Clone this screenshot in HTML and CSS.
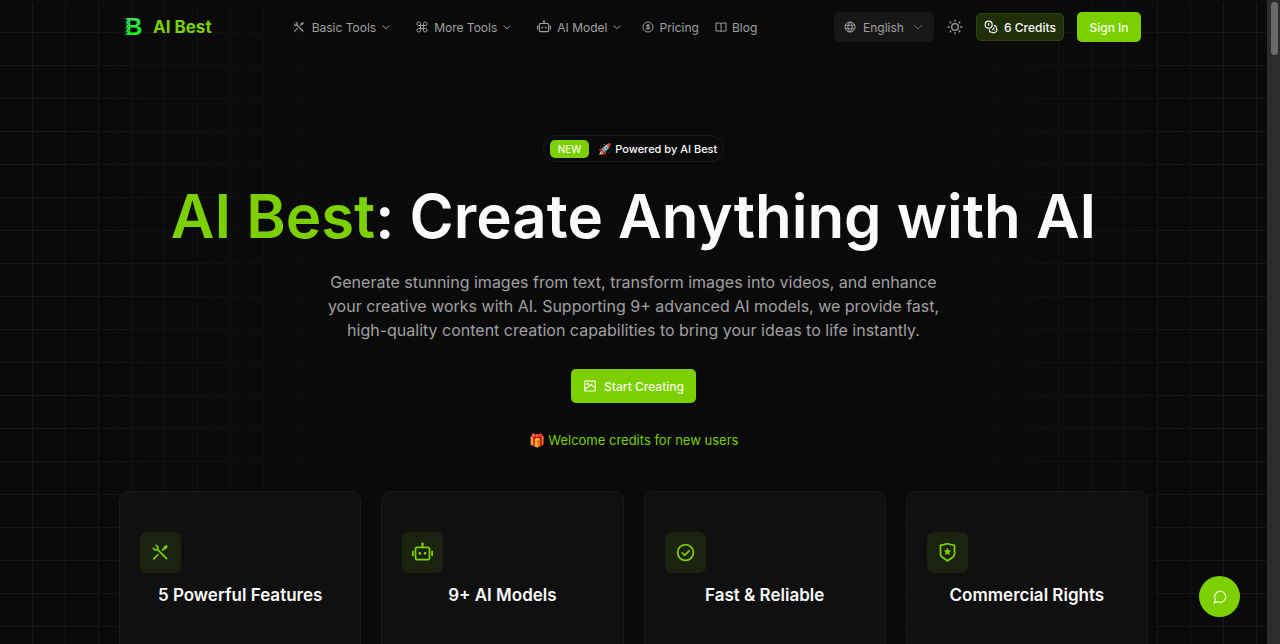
FILE: index.html
```html
<!DOCTYPE html>
<html lang="en">
<head>
    <meta charset="UTF-8">
    <meta name="viewport" content="width=device-width, initial-scale=1.0">
    <title>AI Best</title>
    <link rel="stylesheet" href="styles.css">
</head>
<body>

    <!-- shared icons -->
    <svg class="sprite" aria-hidden="true">
        <symbol id="tools" viewBox="0 0 24 24">
            <path fill="currentColor" d="M5.33 3.27C6.56 2.83 7.99 3.11 8.98 4.09C10.1 5.22 10.3 6.91 9.58 8.23L20.29 18.94L18.88 20.36L8.17 9.65C6.84 10.37 5.15 10.17 4.03 9.04C3.04 8.06 2.77 6.63 3.21 5.39L5.44 7.63C6.03 8.22 6.98 8.22 7.57 7.63C8.15 7.04 8.15 6.09 7.57 5.51ZM15.7 5.16L18.88 3.39L20.29 4.8L18.53 7.98L16.76 8.34L14.64 10.46L13.22 9.04L15.34 6.92ZM8.98 13.29L10.39 14.7L5.09 20C4.7 20.39 4.07 20.39 3.68 20C3.31 19.64 3.29 19.07 3.6 18.68Z"/>
        </symbol>
        <symbol id="robot" viewBox="0 0 24 24">
            <g fill="none" stroke="currentColor" stroke-width="2">
                <rect x="4" y="6" width="16" height="14" rx="2"/>
                <path d="M12 6V2M1 10v6M23 10v6"/>
            </g>
            <g fill="currentColor">
                <circle cx="12" cy="2" r="1.5"/>
                <circle cx="9" cy="13" r="1.5"/>
                <circle cx="15" cy="13" r="1.5"/>
            </g>
        </symbol>
        <symbol id="chevron" viewBox="0 0 24 24">
            <path class="line thick" d="m2 8 10 9 10-9"/>
        </symbol>
    </svg>

    <header class="header">
        <a class="brand" href="#">
            <svg class="brand-logo" viewBox="0 0 20 20" aria-hidden="true">
                <defs>
                    <linearGradient id="logo-fill" x1="0" y1="0" x2="0" y2="1">
                        <stop offset="0" stop-color="#4ade70"/>
                        <stop offset="1" stop-color="#00f50c"/>
                    </linearGradient>
                </defs>
                <text class="logo-letter" x="2" y="18" fill="url(#logo-fill)">B</text>
                <path fill="#14702a" d="M4 3h1v1H4zM5 5h1v1H5zM4 7h1v1H4zM5 9h1v1H5zM4 11h1v1H4zM5 13h1v1H5zM4 15h1v1H4z"/>
                <path fill="#1d7434" d="M1 1h3v1H1zM3 3h1v1H3zM2 5h2v1H2zM3 8h1v1H3zM2 10h2v1H2zM3 12h1v1H3zM2 14h2v1H2zM3 16h1v1H3zM1 17h3v1H1z"/>
            </svg>
            <span>AI Best</span>
        </a>

        <nav class="nav">
            <button class="nav-item" type="button">
                <svg class="icon-14"><use href="#tools"/></svg>
                Basic Tools
                <svg class="caret"><use href="#chevron"/></svg>
            </button>
            <button class="nav-item" type="button">
                <svg class="icon-12" viewBox="0 0 24 24"><path class="line" d="M9 9h6v6H9zM9 9H5.500A3.500 3.500 0 1 1 9 5.500zM15 9V5.500a3.500 3.500 0 1 1 3.500 3.500zM15 15h3.500a3.500 3.500 0 1 1-3.500 3.500zM9 15v3.500a3.500 3.500 0 1 1-3.500-3.500z"/></svg>
                More Tools
                <svg class="caret"><use href="#chevron"/></svg>
            </button>
            <button class="nav-item" type="button">
                <svg class="icon-14"><use href="#robot"/></svg>
                AI Model
                <svg class="caret"><use href="#chevron"/></svg>
            </button>
            <a class="nav-item nav-link" href="#">
                <svg class="icon-12" viewBox="0 0 24 24"><circle class="line" cx="12" cy="12" r="10"/><path class="line" d="M16 8.500h-5.500a1.750 1.750 0 0 0 0 3.500h3a1.750 1.750 0 0 1 0 3.500H8M12 6v12"/></svg>
                Pricing
            </a>
            <a class="nav-item nav-link" href="#">
                <svg class="icon-12" viewBox="0 0 24 24"><path class="line" d="M12 5.500C11 4.500 10 4 8.500 4H2v16h7c1.500 0 2.500.5 3 1.500.5-1 1.500-1.500 3-1.500h7V4h-6.500C14 4 13 4.500 12 5.500zM12 5v17"/></svg>
                Blog
            </a>
        </nav>

        <div class="actions">
            <button class="language" type="button">
                <svg class="icon-12" viewBox="0 0 24 24"><path class="line" d="M12 2a10 10 0 1 0 0 20 10 10 0 0 0 0-20zM12 2c-5.500 5-5.500 15 0 20M12 2c5.500 5 5.500 15 0 20M3 8.500h18M3 15.500h18"/></svg>
                <span>English</span>
                <svg class="icon-12 dim" viewBox="0 0 24 24"><path class="line" d="m4 8 8 8 8-8"/></svg>
            </button>
            <button class="theme" type="button" aria-label="Toggle theme">
                <svg class="icon-16" viewBox="0 0 24 24"><circle class="line" cx="12" cy="12" r="5"/><path class="line" d="M12 1v3M12 20v3M1 12h3M20 12h3M4.200 4.200l2.100 2.100M17.700 17.700l2.100 2.100M19.800 4.200l-2.100 2.100M6.300 17.700l-2.100 2.100"/></svg>
            </button>
            <a class="credits" href="#">
                <svg class="icon-14" viewBox="0 0 24 24"><path class="line" d="M8 2a6 6 0 1 0 0 12A6 6 0 0 0 8 2zM7 6h1v4M12.500 20.500a5.500 5.500 0 1 0 8-8M9 16c0 3 1 4.500 3 5.500M17 9c2 .5 3.500 1.500 4.500 3.500M14 17l4-4M17 18l1-1"/></svg>
                6 Credits
            </a>
            <button class="btn sign-in" type="button">Sign In</button>
        </div>
    </header>

    <main>
        <section class="hero">
            <a class="announce" href="#">
                <span class="tag">NEW</span>
                <span>🚀 Powered by AI Best</span>
            </a>
            <h1><span class="highlight">AI Best</span>: Create Anything with AI</h1>
            <p class="intro">
                Generate stunning images from text, transform images into videos, and enhance<br>
                your creative works with AI. Supporting 9+ advanced AI models, we provide fast,<br>
                high-quality content creation capabilities to bring your ideas to life instantly.
            </p>
            <a class="btn start" href="#">
                <svg class="icon-14" viewBox="0 0 24 24"><path class="line" d="M3 3.500h18v17H3zM3 18l11-9 7 7"/><circle cx="8" cy="8.500" r="2" fill="currentColor"/></svg>
                Start Creating
            </a>
            <p class="welcome">🎁 Welcome credits for new users</p>
        </section>

        <section class="features">
            <article class="card">
                <div class="card-icon"><svg class="icon-21"><use href="#tools"/></svg></div>
                <h2>5 Powerful Features</h2>
            </article>
            <article class="card">
                <div class="card-icon"><svg class="icon-21"><use href="#robot"/></svg></div>
                <h2>9+ AI Models</h2>
            </article>
            <article class="card">
                <div class="card-icon">
                    <svg class="icon-21" viewBox="0 0 24 24"><circle class="line" cx="12" cy="12" r="9"/><path class="line" d="m7.700 12 3.300 3.300 5.700-5.700"/></svg>
                </div>
                <h2>Fast &amp; Reliable</h2>
            </article>
            <article class="card">
                <div class="card-icon">
                    <svg class="icon-21" viewBox="0 0 24 24"><path class="line" d="m12 2 8 2v9.800c0 1.300-.7 2.600-1.800 3.300L12 21.500l-6.200-4.400A4 4 0 0 1 4 13.800V4z"/><path fill="currentColor" d="m12 6.500 1.300 2.800 3.100.4-2.300 2.100.6 3.200-2.700-1.500L9.300 15l.6-3.200-2.300-2.100 3.100-.4z"/></svg>
                </div>
                <h2>Commercial Rights</h2>
            </article>
        </section>
    </main>

    <button class="chat" type="button" aria-label="Open chat">
        <svg class="icon-14" viewBox="0 0 24 24"><path class="line" d="M7.900 20A9.500 9.500 0 1 0 4 16.100L2 22z"/></svg>
    </button>

    <div class="scrollbar" aria-hidden="true"><div class="thumb"></div></div>

</body>
</html>
```
FILE: styles.css
```css
* {
    margin: 0;
    padding: 0;
    box-sizing: border-box;
}

html {
    background-color: #0a0a0a;
}

body {
    display: flex;
    flex-direction: column;
    min-height: 100vh;
    padding-right: 13px;
    position: relative;
    color: #fafafa;
    font-family: Inter, "Noto Sans", sans-serif;
    font-size: 12px;
}

/* faint grid, fading out towards the middle */
body::before,
body::after {
    content: "";
    position: absolute;
    top: 3px;
    bottom: 0;
    z-index: -1;
    width: 40%;
    background-image:
        linear-gradient(#181818 1px, transparent 1px),
        linear-gradient(90deg, #181818 1px, transparent 1px);
    background-size: 33px 33px;
}

body::before {
    left: 0;
    background-position: 32px 29px;
    -webkit-mask-image: linear-gradient(90deg, #000 10%, transparent 75%);
    mask-image: linear-gradient(90deg, #000 10%, transparent 75%);
}

body::after {
    right: 13px;
    background-position: right 11px top 29px;
    -webkit-mask-image: linear-gradient(270deg, #000 10%, transparent 75%);
    mask-image: linear-gradient(270deg, #000 10%, transparent 75%);
}

a {
    color: inherit;
    text-decoration: none;
}

button {
    border: none;
    background: none;
    color: inherit;
    font: inherit;
    cursor: pointer;
}

svg {
    flex: none;
}

.sprite {
    display: none;
}

.line {
    fill: none;
    stroke: currentColor;
    stroke-width: 2;
}

.thick {
    stroke-width: 3;
}

.icon-12 {
    width: 12px;
    height: 12px;
}

.icon-14 {
    width: 14px;
    height: 14px;
}

.icon-16 {
    width: 16px;
    height: 16px;
}

.icon-21 {
    width: 21px;
    height: 21px;
}

.dim {
    opacity: 0.6;
}

.header,
.features {
    width: 100%;
    max-width: 1029px;
    margin: 0 auto;
}

/* header */
.header {
    display: flex;
    align-items: center;
    height: 54px;
    padding: 0 7px 0 4px;
}

.brand {
    display: flex;
    align-items: center;
    gap: 10px;
    color: #7ccf00;
    font-size: 17px;
    font-weight: 700;
}

.brand-logo {
    width: 20px;
    height: 20px;
    overflow: visible;
}

.logo-letter {
    font-family: "Liberation Sans", sans-serif;
    font-size: 24px;
    font-weight: 700;
}

.nav {
    display: flex;
    margin-left: 67px;
    color: #a1a1a1;
}

.nav-item {
    display: flex;
    align-items: center;
    gap: 6px;
    padding: 0 13px;
    white-space: nowrap;
}

.nav-link {
    gap: 5px;
    padding: 0 8px;
}

.caret {
    width: 8px;
    height: 8px;
}

.actions {
    display: flex;
    align-items: center;
    gap: 13px;
    margin-left: auto;
}

.language {
    display: flex;
    align-items: center;
    gap: 7px;
    width: 100px;
    height: 30px;
    padding: 0 10px;
    border-radius: 5px;
    background-color: #171717;
    color: #a1a1a1;
}

.language span {
    flex: 1;
    text-align: left;
}

.theme {
    display: flex;
    color: #a1a1a1;
}

.credits {
    display: flex;
    align-items: center;
    justify-content: center;
    gap: 6px;
    width: 88px;
    height: 28px;
    border: 1px solid #2e4310;
    border-radius: 5px;
    background-color: #212e0a;
    font-weight: 500;
}

.btn {
    display: flex;
    align-items: center;
    justify-content: center;
    border-radius: 5px;
    background-color: #7ccf00;
    color: #f7fee7;
    font-weight: 500;
}

.sign-in {
    width: 64px;
    height: 30px;
}

main {
    display: flex;
    flex: 1;
    flex-direction: column;
}

/* hero */
.hero {
    display: flex;
    flex-direction: column;
    align-items: center;
    padding: 81px 20px 41px;
    text-align: center;
}

.announce {
    display: flex;
    align-items: center;
    gap: 9px;
    height: 27px;
    padding: 0 6px;
    border: 1px solid #1c1c1c;
    border-radius: 14px;
    font-size: 11px;
    font-weight: 500;
}

.tag {
    padding: 0 8px;
    border-radius: 5px;
    background-color: #7ccf00;
    color: #f7fee7;
    font-size: 10px;
    line-height: 18px;
}

h1 {
    margin-top: 23px;
    font-size: 60px;
    font-weight: 600;
    line-height: 62px;
}

.highlight {
    color: #7ccf00;
}

.intro {
    margin-top: 23px;
    color: #a1a1a1;
    font-size: 16px;
    line-height: 24px;
}

.start {
    gap: 7px;
    height: 34px;
    margin-top: 27px;
    padding: 0 12px;
}

.welcome {
    margin-top: 27px;
    color: #7ccf00;
    font-size: 13px;
    line-height: 20px;
}

/* feature cards run down to the fold */
.features {
    display: grid;
    flex: 1;
    grid-template-columns: repeat(4, 1fr);
    gap: 20px;
}

.card {
    padding: 40px 20px 20px;
    border: 1px solid #1b1b1b;
    border-bottom: none;
    border-radius: 10px 10px 0 0;
    background-color: #101010;
    text-align: center;
}

.card-icon {
    display: flex;
    align-items: center;
    justify-content: center;
    width: 41px;
    height: 41px;
    border-radius: 7px;
    background-color: #1b230f;
    color: #7ccf00;
}

.card h2 {
    margin-top: 10px;
    font-size: 17px;
    font-weight: 600;
    line-height: 24px;
    white-space: nowrap;
}

.chat {
    position: fixed;
    right: 40px;
    bottom: 27px;
    display: flex;
    align-items: center;
    justify-content: center;
    width: 41px;
    height: 41px;
    border-radius: 50%;
    background-color: #7ccf00;
    color: #f7fee7;
}

.scrollbar {
    position: fixed;
    top: 0;
    right: 0;
    bottom: 0;
    width: 13px;
    padding: 2px 2px 2px 4px;
    background-color: #2c2c2c;
}

.thumb {
    height: 53px;
    border-radius: 4px;
    background-color: #6b6b6b;
}
```
